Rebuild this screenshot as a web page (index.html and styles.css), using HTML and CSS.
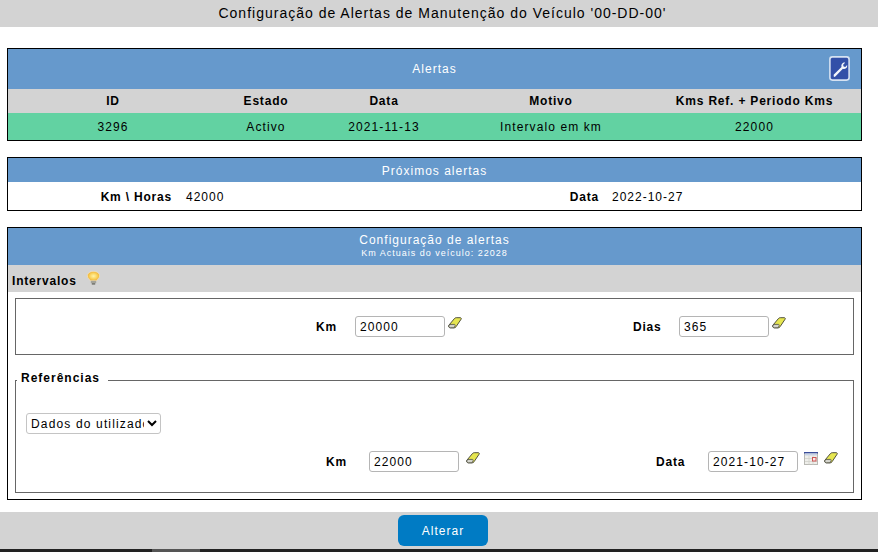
FILE: index.html
```html
<!DOCTYPE html>
<html lang="pt">
<head>
<meta charset="utf-8">
<title>Configuração de Alertas</title>
<link rel="stylesheet" href="styles.css">
</head>
<body>
<svg class="defs" width="0" height="0" aria-hidden="true">
  <symbol id="eraser" viewBox="0 0 14 12">
    <path d="M.9 8.200 6.300 1.700C6.900 1 7.500.7 8.300.7h3.900c1 0 1.400.8.900 1.500L8 9.800c-.5.7-1 1-1.800 1H2.300C.9 10.800.3 9.300.9 8.200Z" fill="#e6e650" stroke="#3f3f30" stroke-width=".9"/>
    <path d="M1 8.100c.6-.6 1.200-.7 2-.7h3.300c.8 0 1.100.7.800 1.400l-1 2H2.300C.9 10.800.4 9.200 1 8.100Z" fill="#d4d4cc" stroke="#4d4d42" stroke-width=".8"/>
  </symbol>
</svg>

<header class="top-bar">Configuração de Alertas de Manutenção do Veículo '00-DD-00'</header>

<main class="content">
  <section class="panel panel-alerts">
    <div class="panel-head panel-head-tall">
      Alertas
      <a class="tool-btn" href="#" aria-label="Configurar">
        <svg viewBox="0 0 21 25" width="21" height="25">
          <rect x=".9" y=".9" width="19.200" height="23.200" rx="2.500" fill="#3350a8" stroke="#d6e2f2" stroke-width="1.600"/>
          <path d="M4.600 18.800 12.500 11c-.5-1.700.1-3.200 1.400-4 .8-.4 1.500-.5 2.200-.3l-2 2.100.5 1.700 1.700.4 1.800-2c.3 1.300 0 2.500-1.100 3.400-1 .8-2.100.9-3.100.5l-7.600 7.800c-.6.500-1.100.4-1.500 0-.4-.5-.3-1.100.1-1.600Z" fill="#f4f6fb"/>
        </svg>
      </a>
    </div>
    <div class="alert-grid alert-grid-head">
      <span>ID</span><span>Estado</span><span>Data</span><span>Motivo</span><span>Kms Ref. + Periodo Kms</span>
    </div>
    <div class="alert-grid alert-grid-row">
      <span>3296</span><span>Activo</span><span>2021-11-13</span><span>Intervalo em km</span><span>22000</span>
    </div>
  </section>

  <section class="panel panel-next">
    <div class="panel-head panel-head-short">Próximos alertas</div>
    <div class="next-row">
      <b class="next-label">Km \ Horas</b><span class="next-value">42000</span>
      <b class="next-label">Data</b><span class="next-value next-value-date">2022-10-27</span>
    </div>
  </section>

  <section class="panel panel-config">
    <div class="panel-head panel-head-config">
      <div>Configuração de alertas</div>
      <div class="head-sub">Km Actuais do veículo: 22028</div>
    </div>
    <div class="section-bar">
      <b>Intervalos</b>
      <svg class="bulb" viewBox="0 0 13 14" width="13" height="14" aria-hidden="true">
        <defs><radialGradient id="glow" cx=".5" cy=".5" r=".6"><stop offset="0" stop-color="#fff3a8"/><stop offset=".55" stop-color="#f9cf55"/><stop offset="1" stop-color="#e59a2c"/></radialGradient></defs>
        <path d="M6.500.4C2.900.4.400 2.300.400 4.900c0 2.100 2.200 3 3 4.900h6.200c.8-1.900 3-2.800 3-4.900C12.600 2.300 10.100.4 6.500.4Z" fill="url(#glow)" stroke="#f6eecb" stroke-width=".6"/>
        <rect x="3.800" y="9.800" width="5.400" height="2.400" fill="#a3a39a"/>
        <rect x="4.800" y="12.200" width="3.400" height="1.400" fill="#6a6a63"/>
      </svg>
    </div>

    <div class="box box-intervals">
      <b class="label label-km1">Km</b>
      <input class="field" type="text" value="20000">
      <svg class="ico-eraser" width="14" height="12"><use href="#eraser"/></svg>
      <b class="label label-dias">Dias</b>
      <input class="field" type="text" value="365">
      <svg class="ico-eraser" width="14" height="12"><use href="#eraser"/></svg>
    </div>

    <fieldset class="box-ref">
      <legend>Referências</legend>
      <select class="ref-select"><option>Dados do utilizador</option></select>
      <div class="ref-row">
        <b class="label label-km2">Km</b>
        <input class="field" type="text" value="22000">
        <svg class="ico-eraser ico-gap" width="14" height="12"><use href="#eraser"/></svg>
        <b class="label label-data">Data</b>
        <input class="field" type="text" value="2021-10-27">
        <svg class="ico-cal" viewBox="0 0 14 13" width="14" height="13" aria-hidden="true">
          <rect x=".5" y=".5" width="13" height="12" fill="#eeeeea" stroke="#b9b9b4"/>
          <rect x="0" y="0" width="14" height="1.500" fill="#3a4d9a"/>
          <rect x="1" y="1.500" width="12" height="2" fill="#c7d3e6"/>
          <path d="M1 6.500h12M1 9.500h12M5 3.500v9M9 3.500v9" stroke="#d2d2cc" stroke-width=".8"/>
          <rect x="8.500" y="5.500" width="3.500" height="3.500" fill="#fbeaea" stroke="#cc5555"/>
        </svg>
        <svg class="ico-eraser ico-gap2" width="14" height="12"><use href="#eraser"/></svg>
      </div>
    </fieldset>
  </section>
</main>

<footer class="bottom-bar"><button class="submit" type="button">Alterar</button></footer>
<div class="edge"><span class="edge-thumb"></span></div>
</body>
</html>
```

FILE: styles.css
```css
* { box-sizing: border-box; }
html, body { margin: 0; height: 552px; overflow: hidden; }
body {
  background: #fff;
  color: #000;
  font-family: "Liberation Sans", Arial, sans-serif;
  font-size: 12px;
  letter-spacing: 1px;
}
b { letter-spacing: .8px; }
.defs { position: absolute; }
.top-bar {
  height: 27px;
  padding-left: 7px;
  background: #d3d3d3;
  text-align: center;
  font-size: 14px;
  line-height: 27px;
}
.content {
  display: flex;
  flex-direction: column;
  gap: 16px;
  padding: 21px 16px 0 7px;
}
.panel { border: 1px solid #000; }
.panel-alerts { height: 93px; }
.panel-next { height: 54px; }
.panel-config { height: 273px; }
.panel-head {
  background: #6699cc;
  color: #fff;
  text-align: center;
  position: relative;
}
.panel-head-tall { height: 40px; line-height: 40px; }
.panel-head-short { height: 24px; line-height: 26px; }
.panel-head-config { height: 37px; padding-top: 5px; line-height: 14px; }
.head-sub { font-size: 9px; line-height: 11px; margin-top: 1px; }
.tool-btn {
  position: absolute;
  top: 7px;
  right: 11px;
  width: 21px;
  height: 25px;
  display: block;
}
.tool-btn svg { display: block; }
.alert-grid {
  display: grid;
  grid-template-columns: 210px 96px 140px 194px 1fr;
  text-align: center;
  align-items: center;
}
.alert-grid-head {
  height: 24px;
  background: #d3d3d3;
  font-weight: bold;
  letter-spacing: .8px;
}
.alert-grid-row {
  height: 27px;
  background: #62d2a2;
  letter-spacing: 1.1px;
}
.next-row {
  height: 28px;
  padding-top: 2px;
  display: grid;
  grid-template-columns: 164px 397px 30px 1fr;
  align-items: center;
}
.next-label { text-align: right; }
.next-value { padding-left: 14px; }
.next-value-date { padding-left: 13px; }
.section-bar {
  height: 27px;
  padding: 4px 0 0 4px;
  background: #d3d3d3;
  display: flex;
  align-items: center;
}
.bulb { margin: -6px 0 0 10px; }
.box {
  margin: 6px 7px 0 7px;
  height: 57px;
  border: 1px solid #666;
}
.box-intervals {
  display: flex;
  align-items: center;
  padding-left: 300px;
}
.field {
  width: 90px;
  height: 21px;
  border: 1px solid #b5b5b5;
  border-radius: 3px;
  padding: 0 4px;
  background: #fff;
  color: #000;
  font: 12px "Liberation Sans", Arial, sans-serif;
  letter-spacing: 1.1px;
  outline: none;
}
.ico-eraser, .ico-cal { flex: none; }
.ico-eraser { margin-top: -8px; }
.ico-cal { margin-top: -6px; margin-left: 6px; }
.label-km1 { width: 39px; }
.box-intervals .ico-eraser { margin-left: 3px; }
.label-dias { width: 46px; margin-left: 171px; }
.box-ref {
  margin: 16px 7px 0 7px;
  height: 122px;
  border: 1px solid #666;
  padding: 0;
  min-width: 0;
}
.box-ref legend {
  margin-left: 1px;
  padding: 0 8px 4px 4px;
  line-height: 14px;
  font-weight: bold;
}
.ref-select {
  display: block;
  margin: 24px 0 0 10px;
  width: 135px;
  height: 21px;
  padding: 0;
  border: 1px solid #c4c4c4;
  border-radius: 3px;
  background: #fff;
  color: #000;
  font: 12px "Liberation Sans", Arial, sans-serif;
  letter-spacing: 1.15px;
}
.ref-row {
  display: flex;
  align-items: center;
  margin-top: 17px;
  padding-left: 310px;
}
.label-km2 { width: 43px; }
.ico-gap { margin-left: 7px; }
.label-data { width: 52px; margin-left: 176px; }
.ico-gap2 { margin-left: 6px; }
.bottom-bar {
  position: absolute;
  left: 0; right: 0;
  top: 512px;
  height: 37px;
  background: #d3d3d3;
  display: flex;
  justify-content: center;
  padding: 3px 0 0 8px;
}
.submit {
  width: 90px;
  height: 31px;
  border: 0;
  border-radius: 6px;
  background: #007bc4;
  color: #fff;
  font: 12px "Liberation Sans", Arial, sans-serif;
  letter-spacing: 1px;
}
.edge {
  position: absolute;
  left: 0; right: 0;
  top: 549px;
  height: 3px;
  background: #222;
}
.edge-thumb {
  position: absolute;
  left: 152px;
  width: 48px;
  height: 3px;
  background: #555;
}
```
